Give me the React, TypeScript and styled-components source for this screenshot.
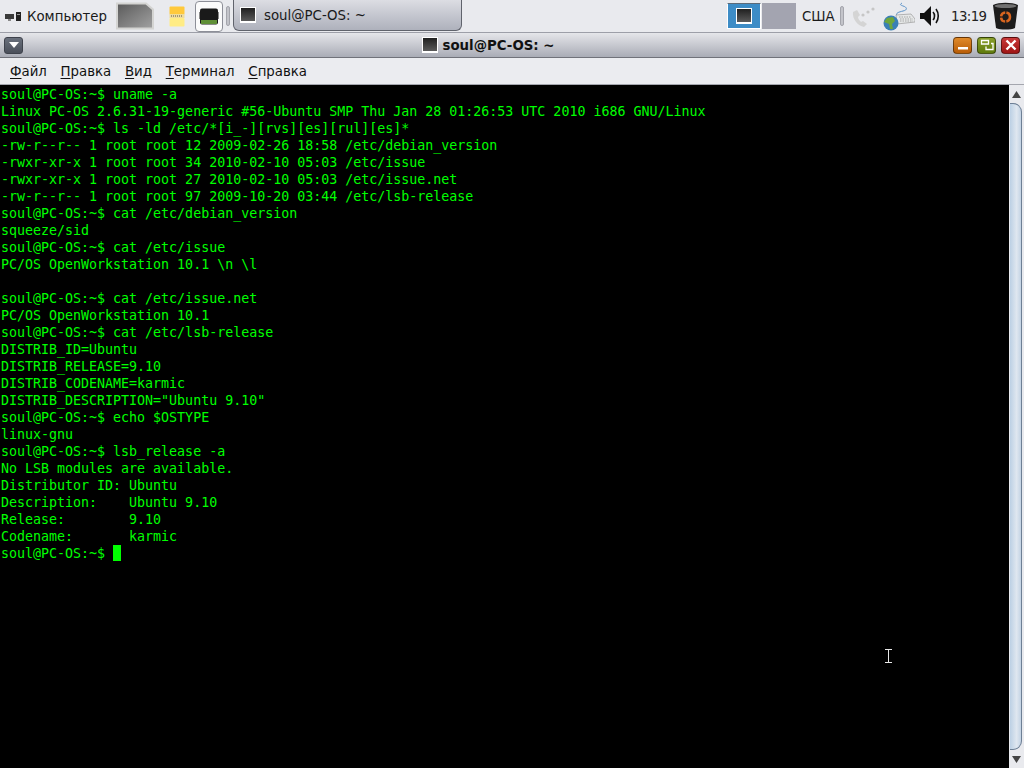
import styled, {createGlobalStyle} from "styled-components";

const lines = [
    "soul@PC-OS:~$ uname -a",
    "Linux PC-OS 2.6.31-19-generic #56-Ubuntu SMP Thu Jan 28 01:26:53 UTC 2010 i686 GNU/Linux",
    "soul@PC-OS:~$ ls -ld /etc/*[i_-][rvs][es][rul][es]*",
    "-rw-r--r-- 1 root root 12 2009-02-26 18:58 /etc/debian_version",
    "-rwxr-xr-x 1 root root 34 2010-02-10 05:03 /etc/issue",
    "-rwxr-xr-x 1 root root 27 2010-02-10 05:03 /etc/issue.net",
    "-rw-r--r-- 1 root root 97 2009-10-20 03:44 /etc/lsb-release",
    "soul@PC-OS:~$ cat /etc/debian_version",
    "squeeze/sid",
    "soul@PC-OS:~$ cat /etc/issue",
    "PC/OS OpenWorkstation 10.1 \\n \\l",
    "",
    "soul@PC-OS:~$ cat /etc/issue.net",
    "PC/OS OpenWorkstation 10.1",
    "soul@PC-OS:~$ cat /etc/lsb-release",
    "DISTRIB_ID=Ubuntu",
    "DISTRIB_RELEASE=9.10",
    "DISTRIB_CODENAME=karmic",
    'DISTRIB_DESCRIPTION="Ubuntu 9.10"',
    "soul@PC-OS:~$ echo $OSTYPE",
    "linux-gnu",
    "soul@PC-OS:~$ lsb_release -a",
    "No LSB modules are available.",
    "Distributor ID: Ubuntu",
    "Description:    Ubuntu 9.10",
    "Release:        9.10",
    "Codename:       karmic",
];

const menuItems = [
    {key: "Ф", rest: "айл"},
    {key: "П", rest: "равка"},
    {key: "В", rest: "ид"},
    {key: "Т", rest: "ерминал"},
    {key: "С", rest: "правка"},
];

export default function App() {
    return (
        <>
            <Global/>
            <Desktop>
                <Panel>
                    <StartMenu>
                        <svg width="16" height="11" viewBox="0 0 16 11">
                            <rect x="0" y="3" width="9" height="5" fill="#3a3a3a"/>
                            <rect x="3" y="8" width="3" height="2" fill="#888"/>
                            <rect x="11" y="1" width="5" height="9" fill="#222"/>
                            <rect x="12" y="3" width="3" height="1" fill="#999"/>
                        </svg>
                        <span>Компьютер</span>
                    </StartMenu>
                    <Launcher>
                        <svg width="38" height="28" viewBox="0 0 38 28">
                            <defs>
                                <linearGradient id="pad" x1="0" y1="0" x2="1" y2="1">
                                    <stop offset="0" stopColor="#5a5a5a"/>
                                    <stop offset="1" stopColor="#a2a2a2"/>
                                </linearGradient>
                            </defs>
                            <path d="M1 1.5h29l7 6v19H1z" fill="url(#pad)" stroke="#d4d4d2" strokeWidth="2"/>
                        </svg>
                    </Launcher>
                    <NoteIcon>
                        <svg width="16" height="21" viewBox="0 0 16 21">
                            <rect x="0.5" y="0.5" width="15" height="8" rx="1" fill="#ffc93c"/>
                            <rect x="0.5" y="8" width="15" height="4" fill="#f0dc9c"/>
                            <path d="M2 10h12" stroke="#555" strokeDasharray="1 1"/>
                            <rect x="0.5" y="12" width="15" height="8.5" rx="1" fill="#ffec85"/>
                        </svg>
                    </NoteIcon>
                    <TerminalLauncher>
                        <svg width="20" height="17" viewBox="0 0 20 17">
                            <rect x="1" y="0.5" width="18" height="16" rx="2" fill="#1a1a1a"/>
                            <rect x="2" y="12" width="16" height="4" fill="#5f8f36"/>
                            <rect x="0" y="4" width="1" height="7" fill="#888"/>
                            <rect x="19" y="4" width="1" height="7" fill="#888"/>
                        </svg>
                    </TerminalLauncher>
                    <Handle/>
                    <TaskButton>
                        <TermThumb/>
                        <span>soul@PC-OS: ~</span>
                    </TaskButton>
                    <Tray>
                        <Pager>
                            <ActiveDesk><TermThumb/></ActiveDesk>
                            <IdleDesk/>
                        </Pager>
                        <Layout>США</Layout>
                        <Handle/>
                        <TrayIcon $width={25} $gap={7}>
                            <svg width="25" height="24" viewBox="0 0 25 24">
                                <path d="M2 8c-1 7 5 14 11 15l3-3-4-3-2 1c-1-1-3-3-3-5l2-2-3-5z" fill="#d4d4d4"/>
                                <circle cx="12" cy="11" r="1.6" fill="#c6c6c6"/>
                                <circle cx="17" cy="8" r="1.6" fill="#c6c6c6"/>
                                <circle cx="22" cy="5" r="1.6" fill="#c6c6c6"/>
                            </svg>
                        </TrayIcon>
                        <TrayIcon $width={32} $gap={7}>
                            <svg width="32" height="29" viewBox="0 0 32 29">
                                <path d="M14 14c-2-3 2-4 6-5 5-1 4-4 0-5-2-1-4-1-1-3" fill="none" stroke="#5b93c9"/>
                                <path d="M13 13l15-1 4 5v3l-18 2z" fill="#e6e8e8" stroke="#9a9a9a" strokeWidth="0.7"/>
                                <path d="M16 15h12M17 17h13M17 19h13" stroke="#a6a6a6" strokeDasharray="1.5 1"/>
                                <circle cx="8" cy="21" r="7.5" fill="#3a7fb5"/>
                                <path d="M4 16l6-1 2 4-3 3 1 5-3 0-1-5-5-2z" fill="#6ea63c"/>
                            </svg>
                        </TrayIcon>
                        <TrayIcon $width={20} $gap={5}>
                            <svg width="20" height="22" viewBox="0 0 20 22">
                                <path d="M0 8h4l7-7v20l-7-7H0z" fill="#111"/>
                                <path d="M13 7c2 2 2 6 0 8M16 4c3 4 3 10 0 14" fill="none" stroke="#111" strokeWidth="1.6"/>
                            </svg>
                        </TrayIcon>
                        <Clock>13:19</Clock>
                        <TrayIcon $width={25} $gap={6}>
                            <svg width="25" height="28" viewBox="0 0 25 28">
                                <path d="M0 3c6-3 19-3 25 0l-3 23c-4 2-15 2-19 0z" fill="#1c1c1c"/>
                                <ellipse cx="12.5" cy="4" rx="11" ry="2" fill="#707070"/>
                                <circle cx="12.5" cy="15" r="4.5" fill="none" stroke="#d8651f" strokeWidth="2.5" strokeDasharray="6 1.2"/>
                            </svg>
                        </TrayIcon>
                    </Tray>
                </Panel>
                <TitleBar>
                    <WindowMenuButton>
                        <svg width="10" height="6" viewBox="0 0 10 6"><path d="M0 0h10L5 6z" fill="#fff"/></svg>
                    </WindowMenuButton>
                    <Title>
                        <TermThumb/>
                        <span>soul@PC-OS: ~</span>
                    </Title>
                    <WindowButtons>
                        <WindowButton $from="#e08a2a" $to="#b85c06">
                            <svg width="12" height="12" viewBox="0 0 12 12"><rect x="1" y="8" width="10" height="2.5" fill="#fff"/></svg>
                        </WindowButton>
                        <WindowButton $from="#8aa02c" $to="#5f7a0c">
                            <svg width="14" height="12" viewBox="0 0 14 12">
                                <path d="M1.5 1.5h7v3.5h-7zM11 4.5h2v6h-7v-3" fill="none" stroke="#fff" strokeWidth="1.3"/>
                            </svg>
                        </WindowButton>
                        <WindowButton $from="#c93a3a" $to="#9e1414">
                            <svg width="12" height="12" viewBox="0 0 12 12">
                                <path d="M1.5 1.5l9 9M10.5 1.5l-9 9" stroke="#fff" strokeWidth="2.4"/>
                            </svg>
                        </WindowButton>
                    </WindowButtons>
                </TitleBar>
                <MenuBar>
                    {menuItems.map((item) => (
                        <MenuItem key={item.key}><u>{item.key}</u>{item.rest}</MenuItem>
                    ))}
                </MenuBar>
                <TerminalArea>
                    <Screen>
                        {lines.map((line, i) => <Line key={i}>{line}</Line>)}
                        <Line>soul@PC-OS:~$ <Cursor/></Line>
                        <MousePointer>
                            <svg width="7" height="14" viewBox="0 0 7 14">
                                <path d="M0 .5h7M0 13.5h7M3.5 0v14" stroke="#e8e8e8"/>
                            </svg>
                        </MousePointer>
                    </Screen>
                    <ScrollBar>
                        <ScrollArrow>
                            <svg width="9" height="9" viewBox="0 0 9 9"><path d="M4.5 1L9 8H0z" fill="#444"/></svg>
                        </ScrollArrow>
                        <ScrollThumb/>
                        <ScrollArrow>
                            <svg width="9" height="9" viewBox="0 0 9 9"><path d="M4.5 8L9 1H0z" fill="#444"/></svg>
                        </ScrollArrow>
                    </ScrollBar>
                </TerminalArea>
            </Desktop>
        </>
    );
}

const Global = createGlobalStyle`
    html, body {
        margin: 0;
        padding: 0;
        background: #000;
    }
`

const Desktop = styled.div`
    width: 1024px;
    height: 768px;
    display: flex;
    flex-direction: column;
    overflow: hidden;
    font-family: "DejaVu Sans", sans-serif;
    font-size: 13.33px;
    color: #1a1a1a;
`

const Panel = styled.div`
    height: 32px;
    flex: none;
    display: flex;
    align-items: center;
    background: #e9eaee;
    border-bottom: 1px solid #9d9fa8;
`

const StartMenu = styled.div`
    display: flex;
    align-items: center;
    gap: 6px;
    padding-left: 5px;
    width: 116px;
    box-sizing: border-box;
`

const Launcher = styled.div`
    width: 38px;
    height: 28px;
    display: flex;
    margin-right: 15px;
`

const NoteIcon = styled.div`
    width: 16px;
    height: 21px;
    display: flex;
    margin-right: 10px;
`

const TerminalLauncher = styled.div`
    width: 28px;
    height: 31px;
    flex: none;
    box-sizing: border-box;
    display: flex;
    align-items: center;
    justify-content: center;
    background: #fbfbfb;
    border: 1px solid #8d8f98;
    border-radius: 4px;
    margin-right: 3px;
`

const Handle = styled.div`
    width: 4px;
    height: 20px;
    flex: none;
    background: #c3c4ca;
    border: 1px solid #a4a5ac;
    border-radius: 2px;
    box-sizing: border-box;
`

const TaskButton = styled.div`
    width: 229px;
    height: 31px;
    margin: -1px 0 0 3px;
    flex: none;
    box-sizing: border-box;
    display: flex;
    align-items: center;
    gap: 8px;
    padding-left: 6px;
    background: linear-gradient(#dcdde3, #aeb1bc);
    border: 1px solid #60636c;
    border-top: none;
    border-radius: 0 0 6px 6px;
`

const TermThumb = styled.div`
    width: 16px;
    height: 16px;
    flex: none;
    box-sizing: border-box;
    border: 1px solid #fff;
    border-bottom-width: 2px;
    background: linear-gradient(#202020, #5a5a5a);
`

const Tray = styled.div`
    margin-left: auto;
    padding-right: 6px;
    display: flex;
    align-items: center;
    height: 100%;
`

const Pager = styled.div`
    display: flex;
    gap: 1px;
    margin-right: 6px;
`

const ActiveDesk = styled.div`
    width: 34px;
    height: 26px;
    box-sizing: border-box;
    display: flex;
    align-items: center;
    justify-content: center;
    background: #3d8cc6;
    border: 1px solid #fff;
    border-top-color: #5c6a78;
`

const IdleDesk = styled.div`
    width: 34px;
    height: 26px;
    background: #a3a4b0;
`

const Layout = styled.div`
    width: 33px;
    margin-right: 5px;
`

const TrayIcon = styled.div<{$width: number; $gap: number}>`
    width: ${(p) => p.$width}px;
    flex: none;
    display: flex;
    align-items: center;
    justify-content: center;
    margin-left: ${(p) => p.$gap}px;
`

const Clock = styled.div`
    width: 36px;
    margin-left: 11px;
    letter-spacing: -0.6px;
    color: #222;
`

const TitleBar = styled.div`
    height: 24px;
    flex: none;
    display: flex;
    align-items: center;
    padding: 0 4px;
    background: linear-gradient(#e5e6ea, #a9acb6);
    border-bottom: 1px solid #70727a;
`

const WindowMenuButton = styled.div`
    width: 19px;
    height: 17px;
    box-sizing: border-box;
    display: flex;
    align-items: center;
    justify-content: center;
    background: linear-gradient(#69707c, #4a4f5a);
    border: 1px solid #3e424c;
    border-radius: 3px;
`

const Title = styled.div`
    flex: 1;
    display: flex;
    align-items: center;
    justify-content: center;
    gap: 5px;
    font-weight: bold;
    color: #111;
`

const WindowButtons = styled.div`
    display: flex;
    gap: 5px;
`

const WindowButton = styled.div<{$from: string; $to: string}>`
    width: 19px;
    height: 17px;
    box-sizing: border-box;
    display: flex;
    align-items: center;
    justify-content: center;
    border-radius: 4px;
    border: 1px solid rgba(0, 0, 0, .45);
    background: linear-gradient(${(p) => p.$from}, ${(p) => p.$to});
`

const MenuBar = styled.div`
    height: 27px;
    flex: none;
    box-sizing: border-box;
    display: flex;
    align-items: center;
    gap: 13.7px;
    padding-left: 10px;
    background: #ebecf0;
    border-bottom: 1px solid #a4a6ae;
`

const MenuItem = styled.div`
    color: #111;
    u {
        text-underline-offset: 2px;
    }
`

const TerminalArea = styled.div`
    flex: 1;
    min-height: 0;
    display: flex;
`

const Screen = styled.div`
    position: relative;
    flex: 1;
    background: #000;
    color: #00ff00;
    padding: 1px 0 0 1px;
    font-family: "DejaVu Sans Mono", monospace;
    font-size: 13.3px;
`

const Line = styled.div`
    height: 17px;
    line-height: 17px;
    white-space: pre;
`

const Cursor = styled.span`
    display: inline-block;
    width: 8px;
    height: 16px;
    vertical-align: top;
    background: #00ff00;
`

const MousePointer = styled.div`
    position: absolute;
    left: 885px;
    top: 564px;
    line-height: 0;
`

const ScrollBar = styled.div`
    width: 15px;
    flex: none;
    display: flex;
    flex-direction: column;
    background: #e9eaee;
`

const ScrollArrow = styled.div`
    height: 18px;
    flex: none;
    display: flex;
    align-items: center;
    justify-content: center;
`

const ScrollThumb = styled.div`
    flex: 1;
    margin: 0 2px 0 1px;
    background: linear-gradient(90deg, #bcd0e4, #dfe7f0 60%, #c3d3e4);
    border: 1px solid #6d7f95;
    border-left: none;
    border-radius: 0 9px 9px 0;
`
